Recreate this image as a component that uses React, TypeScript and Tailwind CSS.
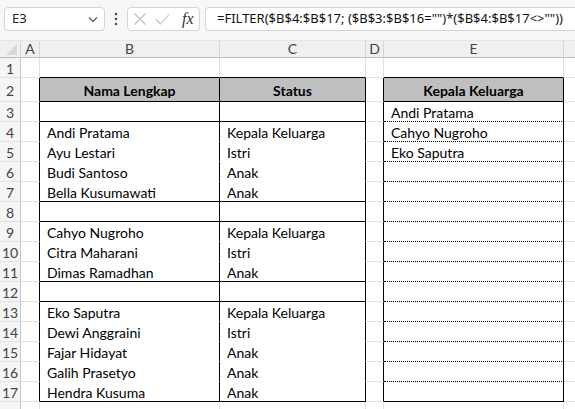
import React from "react";

const COLS = [
  { key: "hdr", w: 21 },
  { key: "A", w: 19 },
  { key: "B", w: 180 },
  { key: "C", w: 146 },
  { key: "D", w: 18 },
  { key: "E", w: 180 },
  { key: "F", w: 40 },
];

const B: Record<number, string> = {
  4: "Andi Pratama",
  5: "Ayu Lestari",
  6: "Budi Santoso",
  7: "Bella Kusumawati",
  9: "Cahyo Nugroho",
  10: "Citra Maharani",
  11: "Dimas Ramadhan",
  13: "Eko Saputra",
  14: "Dewi Anggraini",
  15: "Fajar Hidayat",
  16: "Galih Prasetyo",
  17: "Hendra Kusuma",
};
const C: Record<number, string> = {
  4: "Kepala Keluarga",
  5: "Istri",
  6: "Anak",
  7: "Anak",
  9: "Kepala Keluarga",
  10: "Istri",
  11: "Anak",
  13: "Kepala Keluarga",
  14: "Istri",
  15: "Anak",
  16: "Anak",
  17: "Anak",
};
const E: Record<number, string> = {
  3: "Andi Pratama",
  4: "Cahyo Nugroho",
  5: "Eko Saputra",
};

function rightBorder(col: string, row: number): string {
  if (col === "hdr") return "border-r border-r-[#c6c6c6]";
  if (row >= 2 && row <= 17) {
    if (col === "A" || col === "B" || col === "C" || col === "D" || col === "E")
      return "border-r border-r-black";
  }
  return "border-r border-r-[#e1e1e1]";
}

function bottomBorder(col: string, row: number): string {
  if (col === "hdr") return "border-b border-b-[#e1e1e1]";
  if (col === "B" || col === "C") {
    if (row === 1 || row === 2 || row === 3 || row === 7 || row === 8 || row === 11 || row === 12 || row === 17)
      return "border-b border-b-black";
    if (row >= 4 && row <= 16) return "border-b border-b-white";
  }
  if (col === "E") {
    if (row === 1 || row === 2 || row === 17) return "border-b border-b-black";
    if (row >= 3 && row <= 16) return "border-b border-b-black [border-bottom-style:dotted]";
  }
  return "border-b border-b-[#e1e1e1]";
}

function rowHeight(row: number): string {
  if (row === 2) return "h-[24px]";
  return "h-[20px]";
}

function cellContent(col: string, row: number) {
  if (col === "hdr") {
    if (row > 17) return null;
    return (
      <div className="w-full text-center text-[14px] text-[#444] font-['Lato',sans-serif] leading-none pt-[3px]">
        {row}
      </div>
    );
  }
  if (row === 2) {
    const t = col === "B" ? "Nama Lengkap" : col === "C" ? "Status" : col === "E" ? "Kepala Keluarga" : "";
    if (t)
      return (
        <div className="w-full text-center font-bold text-[14px] text-black font-['Lato',sans-serif] leading-none pt-[3px]">
          {t}
        </div>
      );
    return null;
  }
  let t = "";
  if (col === "B") t = B[row] || "";
  if (col === "C") t = C[row] || "";
  if (col === "E") t = E[row] || "";
  if (!t) return null;
  return (
    <div className="pl-[7px] pt-[3px] text-[14px] text-black font-['Lato',sans-serif] leading-none whitespace-nowrap">
      {t}
    </div>
  );
}

function bg(col: string, row: number) {
  if (col === "hdr") return "bg-[#f5f5f5]";
  if (row === 2 && (col === "B" || col === "C" || col === "E")) return "bg-[#bfbfbf]";
  return "bg-white";
}

export default function App() {
  const rows = Array.from({ length: 18 }, (_, i) => i + 1);
  return (
    <div className="w-[575px] h-[409px] overflow-hidden bg-white select-none">
      {/* Formula bar */}
      <div className="h-[41px] bg-[#f7f7f7] flex items-start pt-[7px] pl-[4px] gap-0 border-b border-[#e6e6e6]">
        <div className="w-[101px] h-[24px] bg-white border border-[#d4d4d4] rounded-[4px] flex items-center justify-between pl-[7px] pr-[5px]">
          <span className="text-[13px] text-[#222] font-['Noto_Sans',sans-serif]">E3</span>
          <svg width="12" height="12" viewBox="0 0 12 12">
            <path d="M2 4.5 L6 8.5 L10 4.5" fill="none" stroke="#555" strokeWidth="1.2" />
          </svg>
        </div>
        <div className="w-[22px] h-[24px] flex items-center justify-center">
          <svg width="4" height="14" viewBox="0 0 4 14">
            <circle cx="2" cy="2" r="1.2" fill="#444" />
            <circle cx="2" cy="7" r="1.2" fill="#444" />
            <circle cx="2" cy="12" r="1.2" fill="#444" />
          </svg>
        </div>
        <div className="w-[73px] h-[24px] bg-white border border-[#d4d4d4] rounded-[4px] flex items-center pl-[5px] gap-[8px]">
          <svg width="14" height="14" viewBox="0 0 14 14">
            <path d="M1.5 1.5 L12.5 12.5 M12.5 1.5 L1.5 12.5" stroke="#bdbdbd" strokeWidth="1.1" fill="none" />
          </svg>
          <svg width="15" height="14" viewBox="0 0 15 14">
            <path d="M1 7.5 L5.5 12 L14 2.5" stroke="#bdbdbd" strokeWidth="1.1" fill="none" />
          </svg>
          <span className="text-[16px] italic text-[#333] font-['Liberation_Serif',serif] leading-none ml-[4px]">
            fx
          </span>
        </div>
        <div className="ml-[5px] flex-1 h-[24px] bg-white border border-[#d4d4d4] rounded-l-[4px] border-r-0 flex items-center pl-[11px]">
          <span className="text-[13px] text-[#111] font-['Noto_Sans',sans-serif] whitespace-nowrap">
            =FILTER($B$4:$B$17; ($B$3:$B$16="")*($B$4:$B$17&lt;&gt;""))
          </span>
        </div>
      </div>
      {/* Column headers */}
      <div className="flex h-[17px]">
        {COLS.map((c) => (
          <div
            key={c.key}
            style={{ width: c.w }}
            className="shrink-0 h-full bg-[#f0f0f0] border-b border-b-[#bdbdbd] border-r border-r-[#d6d6d6] flex items-center justify-center relative"
          >
            {c.key === "hdr" ? (
              <svg className="absolute right-[3px] bottom-[2px]" width="11" height="11" viewBox="0 0 11 11">
                <path d="M11 0 L11 11 L0 11 Z" fill="#d9d9d9" />
              </svg>
            ) : c.key !== "F" ? (
              <span className="text-[14px] text-[#444] font-['Lato',sans-serif] leading-none">{c.key}</span>
            ) : null}
          </div>
        ))}
      </div>
      {/* Rows */}
      {rows.map((r) => (
        <div key={r} className={"flex " + rowHeight(r)}>
          {COLS.map((c) => (
            <div
              key={c.key}
              style={{ width: c.w }}
              className={
                "shrink-0 h-full flex items-center " +
                bg(c.key, r) +
                " " +
                rightBorder(c.key, r) +
                " " +
                bottomBorder(c.key, r)
              }
            >
              {cellContent(c.key, r)}
            </div>
          ))}
        </div>
      ))}
    </div>
  );
}
